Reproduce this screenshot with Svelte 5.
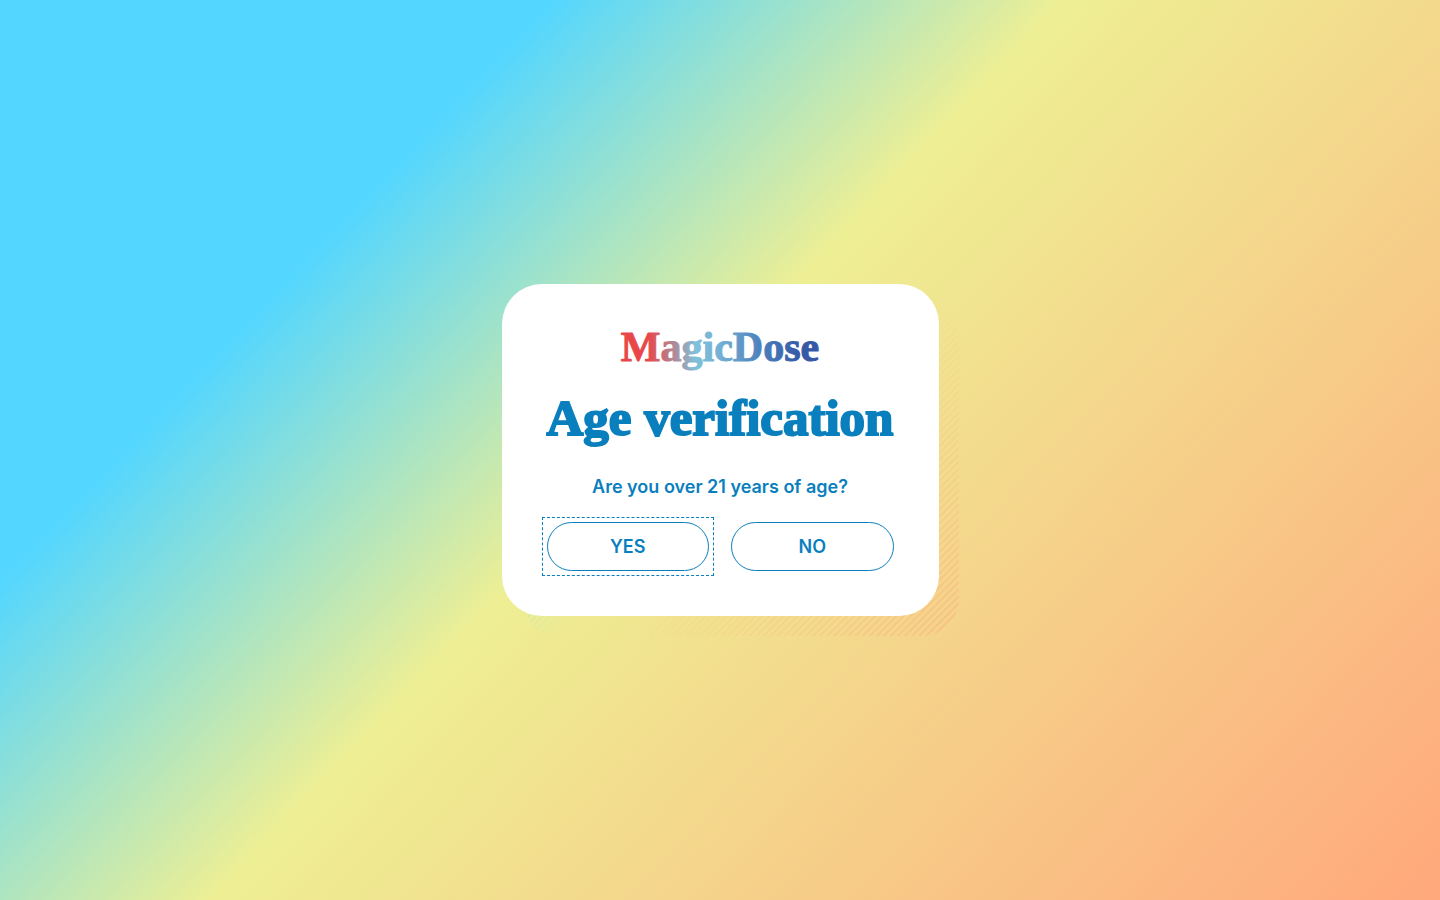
<script>
    import {onMount} from "svelte";

    let yesButton = $state();
    let answer = $state(null);

    onMount(()=>{
        yesButton.focus();
    });

    const choose = (value)=>{
        answer = value;
    }
</script>

<main class="AgeGate">
    <div class="popup">
        <section class="card" aria-labelledby="ageTitle" data-answer={answer}>
            <svg class="logo" width="220" height="48" viewBox="0 0 220 48" role="img" aria-label="MagicDose">
                <defs>
                    <linearGradient id="logoFill" gradientUnits="userSpaceOnUse" x1="10" y1="0" x2="210" y2="0">
                        <stop offset="0.14" stop-color="#e8474a"/>
                        <stop offset="0.38" stop-color="#7fc0da"/>
                        <stop offset="0.5" stop-color="#73b0d4"/>
                        <stop offset="0.72" stop-color="#4a7dba"/>
                        <stop offset="0.9" stop-color="#3759a5"/>
                    </linearGradient>
                </defs>
                <text x="110" y="38" text-anchor="middle">MagicDose</text>
            </svg>

            <h1 id="ageTitle">Age verification</h1>
            <p>Are you over 21 years of age?</p>

            <div class="choices">
                <button bind:this={yesButton} onclick={()=>{choose("yes")}}>YES</button>
                <button onclick={()=>{choose("no")}}>NO</button>
            </div>
        </section>
    </div>
</main>

<style>
    :global(body){
        margin: 0;
    }

    .AgeGate{
        --blue: #0a7fbd;
        --rainbow: linear-gradient(133.5deg, #53d6ff 24%, #eeef94 46.5%, #ffa97c 99%);
        min-height: 100vh;
        display: flex;
        align-items: center;
        justify-content: center;
        background: var(--rainbow);
        color: var(--blue);
        font-family: Inter, "Liberation Sans", sans-serif;
    }

    .popup{
        position: relative;
        isolation: isolate;
        width: 437px;
        max-width: 100%;
    }

    /* striped shadow behind the card */
    .popup::before{
        content: "";
        position: absolute;
        inset: 20px -20px -20px 20px;
        z-index: -1;
        border-radius: 36px;
        background: var(--rainbow);
        opacity: 0.45;
        mask-image: repeating-linear-gradient(135deg, #000 0 1px, transparent 2px 4px, #000 5px);
    }

    .card{
        box-sizing: border-box;
        padding: 39px 45px 45px;
        border-radius: 40px;
        background: #fff;
        display: flex;
        flex-direction: column;
        align-items: center;
    }

    .logo text{
        font-family: "Liberation Serif", serif;
        font-size: 42px;
        font-weight: 700;
        fill: url(#logoFill);
        stroke: url(#logoFill);
        stroke-width: 1px;
        stroke-linejoin: round;
    }

    h1{
        margin: 17px 0 0;
        font-family: "Liberation Serif", serif;
        font-size: 51px;
        font-weight: 700;
        line-height: 60px;
        white-space: nowrap;
        -webkit-text-stroke: 2px var(--blue);
    }

    p{
        margin: 27px 0 23px;
        font-size: 18px;
        font-weight: 600;
        line-height: 24px;
    }

    .choices{
        align-self: stretch;
        display: grid;
        grid-template-columns: 1fr 1fr;
        gap: 22px;
    }

    button{
        position: relative;
        height: 49px;
        padding: 0;
        border: 1px solid var(--blue);
        border-radius: 25px;
        background: none;
        color: var(--blue);
        font-family: inherit;
        font-size: 18px;
        font-weight: 600;
        cursor: pointer;
    }

    button:focus{
        outline: none;
    }

    /* square focus ring, an outline would follow the pill shape */
    button:focus::after{
        content: "";
        position: absolute;
        inset: -6px;
        border: 1px dashed var(--blue);
    }

    @media screen and (max-width: 480px){
        .card{
            padding: 32px 20px;
        }

        h1{
            font-size: 40px;
        }
    }
</style>
